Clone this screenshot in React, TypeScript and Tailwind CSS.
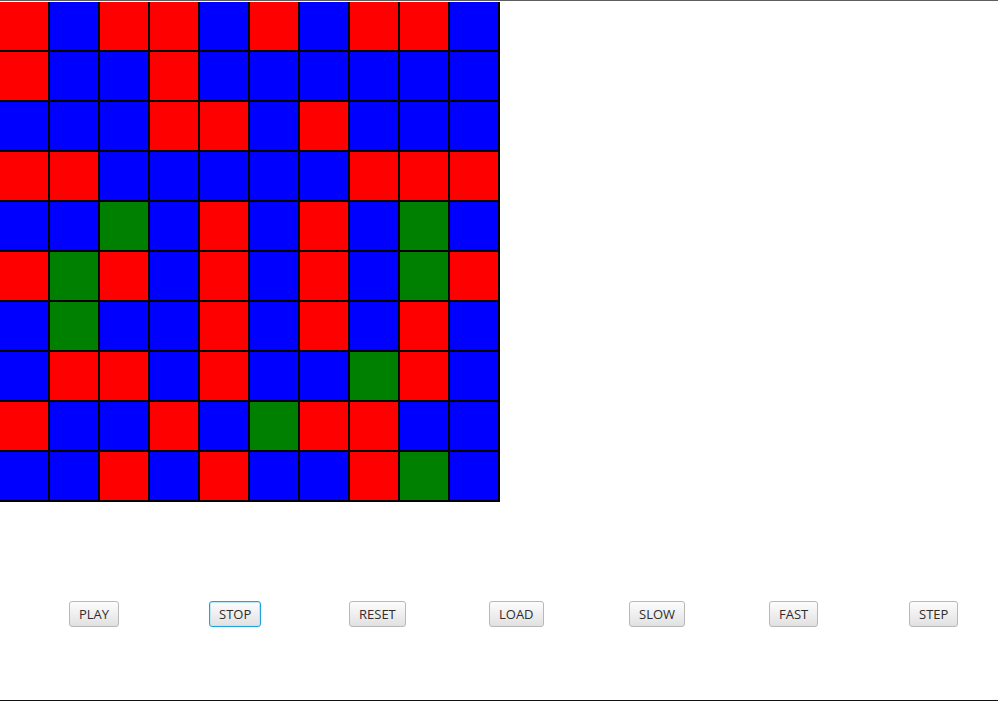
import React from "react";

const GRID = [
  "RBRRBRBRRB",
  "RBBRBBBBBB",
  "BBBRRBRBBB",
  "RRBBBBBRRR",
  "BBGBRBRBGB",
  "RGRBRBRBGR",
  "BGBBRBRBRB",
  "BRRBRBBGRB",
  "RBBRBGRRBB",
  "BBRBRBBRGB",
];

function cellClass(c: string) {
  if (c === "R") return "bg-[#ff0000]";
  if (c === "G") return "bg-[#008000]";
  return "bg-[#0000ff]";
}

const BUTTONS = ["PLAY", "STOP", "RESET", "LOAD", "SLOW", "FAST", "STEP"];

export default function App() {
  return (
    <div
      className="w-[998px] h-[701px] bg-white border-t border-t-[#5e5e5e] border-b border-b-[#111111] flex flex-col overflow-hidden"
      style={{ fontFamily: '"Open Sans", "Liberation Sans", sans-serif' }}
    >
      <div className="pt-[1px]">
        <div className="w-[500px] flex flex-col">
          {GRID.map((row, i) => (
            <div key={i} className="flex h-[50px]">
              {row.split("").map((c, j) => (
                <div
                  key={j}
                  className={`w-[50px] h-[50px] shrink-0 border-r-2 border-b-2 border-black ${cellClass(c)}`}
                />
              ))}
            </div>
          ))}
        </div>
      </div>
      <div className="mt-[99px] flex pl-[69px]">
        {BUTTONS.map((b) => (
          <div key={b} className="w-[140px] shrink-0 flex">
            {b === "STOP" ? (
              <button className="h-[26px] px-[9px] rounded-[3px] border border-[#1fa3dc] bg-gradient-to-b from-[#fdfdfd] to-[#e1e1e1] text-[13px] text-[#2e2e2e] leading-none shadow-[inset_0_0_0_1px_#bfe6f6]">
                {b}
              </button>
            ) : (
              <button className="h-[26px] px-[9px] rounded-[3px] border border-[#b8b8b8] bg-gradient-to-b from-[#fdfdfd] to-[#e1e1e1] text-[13px] text-[#2e2e2e] leading-none">
                {b}
              </button>
            )}
          </div>
        ))}
      </div>
    </div>
  );
}
